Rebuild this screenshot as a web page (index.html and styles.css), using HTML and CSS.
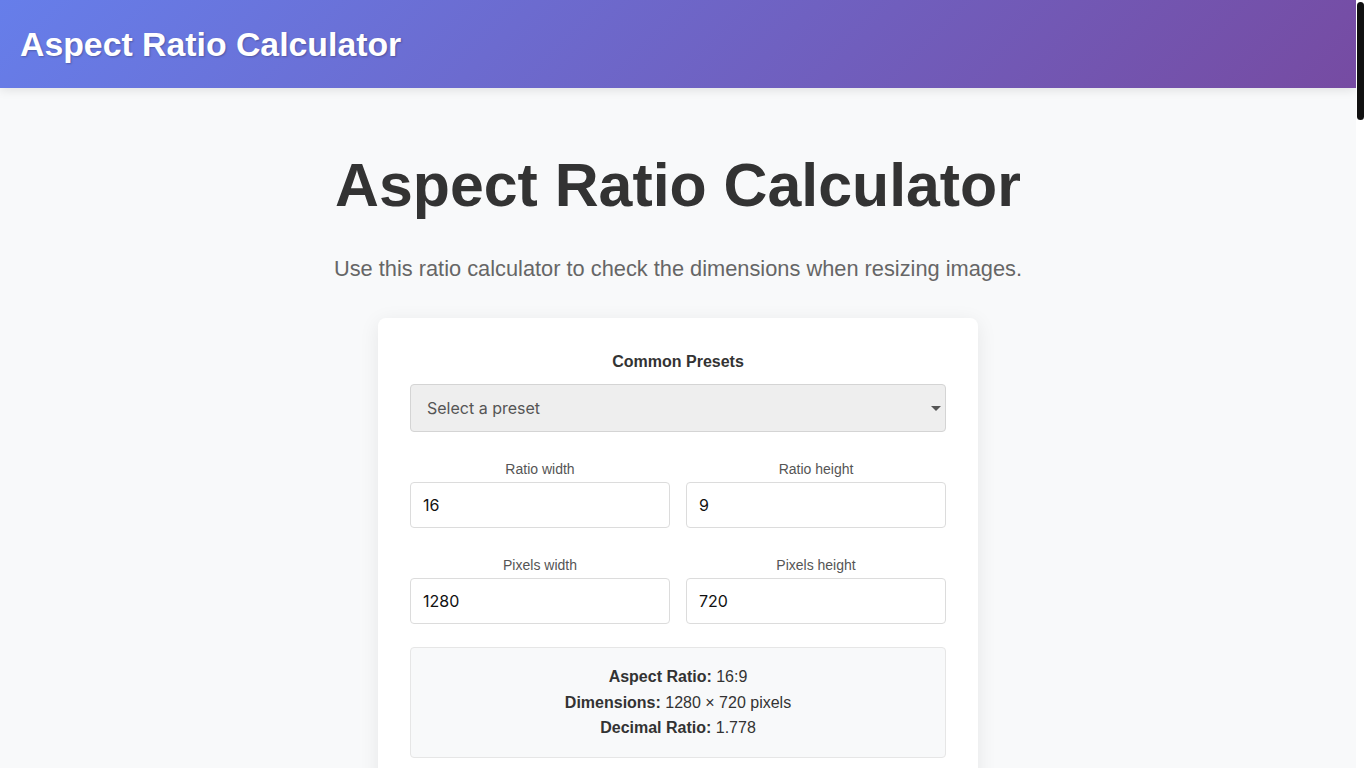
FILE: index.html
```html
<!DOCTYPE html>
<html lang="en">
<head>
<meta charset="utf-8">
<title>Aspect Ratio Calculator</title>
<link rel="stylesheet" href="styles.css">
</head>
<body>
<header class="site-header">
  <div class="brand">Aspect Ratio Calculator</div>
</header>
<main class="page">
  <h1 class="title">Aspect Ratio Calculator</h1>
  <p class="subtitle">Use this ratio calculator to check the dimensions when resizing images.</p>
  <section class="card">
    <div class="presets">
      <label class="presets-label" for="preset">Common Presets</label>
      <div class="select-wrap">
        <select id="preset" class="select">
          <option>Select a preset</option>
          <option>16:9 (1280 × 720)</option>
          <option>4:3 (1024 × 768)</option>
          <option>1:1 (1080 × 1080)</option>
        </select>
      </div>
    </div>
    <div class="row">
      <div class="field">
        <label class="field-label">Ratio width</label>
        <input class="input" type="text" value="16">
      </div>
      <div class="field">
        <label class="field-label">Ratio height</label>
        <input class="input" type="text" value="9">
      </div>
    </div>
    <div class="row">
      <div class="field">
        <label class="field-label">Pixels width</label>
        <input class="input" type="text" value="1280">
      </div>
      <div class="field">
        <label class="field-label">Pixels height</label>
        <input class="input" type="text" value="720">
      </div>
    </div>
    <div class="result">
      <div><strong>Aspect Ratio:</strong> 16:9</div>
      <div><strong>Dimensions:</strong> 1280 × 720 pixels</div>
      <div><strong>Decimal Ratio:</strong> 1.778</div>
    </div>
  </section>
  <section class="info">
    <h2>What is an aspect ratio?</h2>
    <p>The aspect ratio of an image describes the proportional relationship between its width and its height. It is commonly expressed as two numbers separated by a colon, such as 16:9.</p>
    <h2>How to use this calculator</h2>
    <p>Enter a ratio width and height, then type either a pixel width or a pixel height. The other dimension is calculated automatically so the proportions stay the same.</p>
    <h2>Common aspect ratios</h2>
    <p>16:9 is used by most modern screens and video, 4:3 by older monitors and television, 1:1 by square social media images, and 21:9 by ultrawide displays.</p>
  </section>
</main>
<footer class="site-footer">© Aspect Ratio Calculator</footer>
<div class="scrollbar" aria-hidden="true"><div class="scrollbar-thumb"></div></div>
</body>
</html>
```

FILE: styles.css
```css
html {
  background: #f8f9fa;
}
body {
  margin: 0 10px 0 0;
  font-family: "Liberation Sans", Arial, sans-serif;
  color: #333;
  background: #f8f9fa;
}
.scrollbar {
  position: fixed;
  top: 0;
  right: 0;
  width: 10px;
  height: 100vh;
  background: #ffffff;
  z-index: 10;
}
.scrollbar-thumb {
  margin: 2px 2px 0 1px;
  height: 118px;
  background: #111111;
  border-radius: 4px;
}
.site-header {
  background: linear-gradient(135deg, #667eea 0%, #764ba2 100%);
  padding: 20px;
  box-shadow: 0 2px 10px rgba(0, 0, 0, 0.1);
}
.brand {
  font-size: 33.8px;
  line-height: 48px;
  font-weight: bold;
  color: #fff;
  text-shadow: 1px 1px 2px rgba(0, 0, 0, 0.25);
}
.page {
  min-height: 4700px;
  padding: 0 20px;
  display: flex;
  flex-direction: column;
  align-items: center;
}
.title {
  margin: 62px 0 0;
  font-size: 60.8px;
  line-height: 70px;
  font-weight: bold;
  color: #333;
  text-align: center;
}
.subtitle {
  margin: 34px 0 0;
  font-size: 21.8px;
  line-height: 30px;
  color: #666;
  text-align: center;
}
.card {
  margin-top: 34px;
  width: 600px;
  box-sizing: border-box;
  padding: 32px;
  background: #fff;
  border-radius: 8px;
  box-shadow: 0 4px 20px rgba(0, 0, 0, 0.08);
}
.presets {
  display: flex;
  flex-direction: column;
}
.presets-label {
  display: block;
  text-align: center;
  font-weight: bold;
  font-size: 16px;
  line-height: 24px;
  color: #333;
  margin-bottom: 10px;
}
.select-wrap {
  position: relative;
}
.select-wrap::after {
  content: "";
  position: absolute;
  right: 5px;
  top: 22px;
  border-left: 5px solid transparent;
  border-right: 5px solid transparent;
  border-top: 5px solid #555;
  pointer-events: none;
}
.select {
  display: block;
  width: 100%;
  height: 48px;
  box-sizing: border-box;
  appearance: none;
  -webkit-appearance: none;
  background: #eeeeee;
  border: 1px solid #d4d4d4;
  border-radius: 4px;
  padding: 0 16px;
  font-family: Inter, "Liberation Sans", sans-serif;
  font-size: 16px;
  color: #555;
}
.row {
  display: grid;
  grid-template-columns: 1fr 1fr;
  gap: 16px;
  margin-top: 27px;
}
.field {
  display: flex;
  flex-direction: column;
  min-width: 0;
}
.field-label {
  text-align: center;
  font-size: 14px;
  line-height: 20px;
  color: #555;
  margin-bottom: 3px;
}
.input {
  width: 100%;
  height: 46px;
  box-sizing: border-box;
  border: 1px solid #dcdcdc;
  border-radius: 4px;
  padding: 0 12px;
  font-family: Inter, "Liberation Sans", sans-serif;
  font-size: 16px;
  color: #111;
  background: #fff;
}
.result {
  margin-top: 23px;
  padding: 16px 15px;
  background: #f8f9fa;
  border: 1px solid #e6e6e6;
  border-radius: 4px;
  text-align: center;
  font-size: 16px;
  line-height: 25.5px;
  color: #333;
}
.info {
  width: 600px;
  margin-top: 48px;
  color: #555;
  line-height: 1.6;
}
.info h2 {
  color: #333;
  font-size: 24px;
}
.site-footer {
  padding: 24px;
  text-align: center;
  color: #888;
  font-size: 14px;
}
```
